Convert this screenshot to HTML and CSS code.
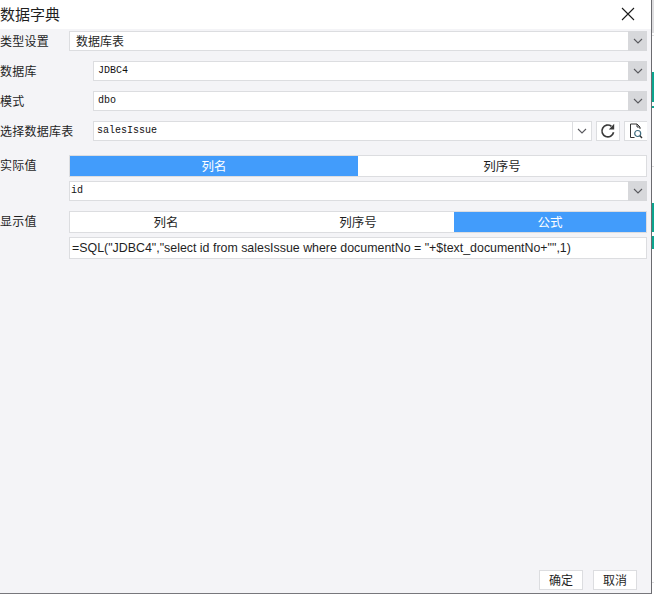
FILE: index.html
```html
<!DOCTYPE html>
<html lang="zh">
<head>
<meta charset="utf-8">
<title>数据字典</title>
<link rel="stylesheet" href="styles.css">
</head>
<body>
<div class="page">
  <div class="dialog">
    <header class="title-bar">
      <span class="title">数据字典</span>
      <button class="close" aria-label="关闭">
        <svg width="14" height="14" viewBox="0 0 14 14"><path d="M1 1 13 13M13 1 1 13" stroke="#1a1a1a" stroke-width="1.1" fill="none"/></svg>
      </button>
    </header>
    <main class="body">
      <div class="row row-type">
        <label class="label wide">类型设置</label>
        <div class="field select"><span class="value zh">数据库表</span><span class="arrow"><svg class="chev" viewBox="0 0 10 6"><path d="M1 1 5 5 9 1"/></svg></span></div>
      </div>
      <div class="row">
        <label class="label">数据库</label>
        <div class="field select"><span class="value mono">JDBC4</span><span class="arrow"><svg class="chev" viewBox="0 0 10 6"><path d="M1 1 5 5 9 1"/></svg></span></div>
      </div>
      <div class="row">
        <label class="label">模式</label>
        <div class="field select"><span class="value mono">dbo</span><span class="arrow"><svg class="chev" viewBox="0 0 10 6"><path d="M1 1 5 5 9 1"/></svg></span></div>
      </div>
      <div class="row">
        <label class="label">选择数据库表</label>
        <div class="field combo"><span class="value mono tight">salesIssue</span><span class="arrow plain"><svg class="chev" viewBox="0 0 10 6"><path d="M1 1 5 5 9 1"/></svg></span></div>
        <button class="tool tool-refresh" aria-label="刷新">
          <svg width="16" height="16" viewBox="0 0 16 16"><path d="M13.6 9.3A5.9 5.9 0 1 1 11.4 3.2" fill="none" stroke="#3a3a3a" stroke-width="1.7"/><path d="M14.2 0.8V6.4H8.8Z" fill="#3a3a3a"/></svg>
        </button>
        <button class="tool tool-preview" aria-label="预览">
          <svg width="14" height="16" viewBox="0 0 14 16"><path d="M5.5 14.5H1.5V1H8L11 4V6M8 1V4H11" fill="none" stroke="#333" stroke-width="1"/><circle cx="8.7" cy="10.5" r="3" fill="none" stroke="#3f6d80" stroke-width="1.2"/><path d="M11 12.8 13 15" stroke="#333" stroke-width="1.4"/></svg>
        </button>
      </div>

      <div class="group group-actual">
        <label class="label wide">实际值</label>
        <div class="stack">
          <div class="segment">
            <span class="seg on">列名</span>
            <span class="seg">列序号</span>
          </div>
          <div class="field select"><span class="value mono flush">id</span><span class="arrow"><svg class="chev" viewBox="0 0 10 6"><path d="M1 1 5 5 9 1"/></svg></span></div>
        </div>
      </div>

      <div class="group group-display">
        <label class="label wide">显示值</label>
        <div class="stack">
          <div class="segment">
            <span class="seg">列名</span>
            <span class="seg">列序号</span>
            <span class="seg on">公式</span>
          </div>
          <div class="field formula">=SQL("JDBC4","select id from salesIssue where documentNo = "+$text_documentNo+"",1)</div>
        </div>
      </div>
    </main>
    <footer class="actions">
      <button class="btn">确定</button>
      <button class="btn">取消</button>
    </footer>
  </div>
  <aside class="backdrop">
    <span class="bd-grey"></span>
    <span class="bd-line l1"></span>
    <span class="bd-line l2"></span>
    <span class="bd-teal first"></span>
    <span class="bd-teal second"></span>
    <span class="bd-line l3"></span>
  </aside>
</div>
</body>
</html>
```

FILE: styles.css
```css
* { box-sizing: border-box; }
html, body { margin: 0; padding: 0; background: #fff; overflow: hidden; }
body {
  font-family: "Noto Sans CJK SC", "Liberation Sans", sans-serif;
  font-size: 13px;
  color: #1f1f1f;
}
.page { display: flex; width: 654px; height: 595px; }
.dialog {
  width: 652px;
  height: 594px;
  flex: none;
  display: flex;
  flex-direction: column;
  background: #f4f4f7;
  border-right: 1px solid #6b6b70;
  border-bottom: 1px solid #77777c;
}
.title-bar {
  height: 29px;
  flex: none;
  display: flex;
  align-items: center;
  justify-content: space-between;
  background: #fff;
  padding: 0 16px 1px 0;
}
.title { font-size: 15px; line-height: 26px; }
.close { width: 14px; height: 14px; padding: 0; border: 0; background: none; display: flex; }
.body { flex: 1; padding: 2px 4px 0 0; display: flex; flex-direction: column; }
.row { display: flex; height: 20px; margin-bottom: 10px; align-items: stretch; }
.label {
  width: 93px;
  flex: none;
  font-size: 12px;
  letter-spacing: 0.25px;
  line-height: 20px;
  white-space: nowrap;
}
.label.wide { width: 69px; }
.field {
  flex: 1;
  min-width: 0;
  display: flex;
  align-items: stretch;
  background: #fff;
  border: 1px solid #dcdde0;
  height: 20px;
}
.value { flex: 1; line-height: 18px; padding-left: 4px; white-space: nowrap; }
.value.zh { font-size: 12px; padding-left: 6px; }
.mono { font-family: "Liberation Mono", "DejaVu Sans Mono", monospace; font-size: 10px; }
.value.mono { color: #111; }
.value.tight { padding-left: 3px; }
.value.flush { padding-left: 1px; }
.arrow {
  width: 19px;
  flex: none;
  background: #d7d8db;
  margin: -1px -1px -1px 0;
  display: flex;
  align-items: center;
  justify-content: center;
}
.arrow.plain { background: #fff; width: 19px; margin: 0; border-left: 1px solid #dcdde0; }
.chev { width: 10px; height: 6px; fill: none; stroke: #5a5a5f; stroke-width: 1.1; }
.tool {
  flex: none;
  height: 20px;
  padding: 0;
  background: #fff;
  border: 1px solid #dcdde0;
  display: flex;
  align-items: center;
  justify-content: center;
}
.tool-refresh { width: 24px; margin-left: 4px; }
.tool-preview { width: 23px; margin-left: 4px; border-right: 0; }
.group { display: flex; }
.group-actual { margin-top: 4px; }
.group-display { margin-top: 10px; }
.stack { flex: 1; min-width: 0; display: flex; flex-direction: column; gap: 4px; }
.segment {
  height: 22px;
  display: flex;
  background: #fff;
  border: 1px solid #dcdde0;
}
.seg {
  flex: 1;
  text-align: center;
  font-size: 12.5px;
  line-height: 20px;
}
.seg.on { background: #429cfb; color: #fff; }
.formula {
  font-family: "Liberation Sans", sans-serif;
  font-size: 12.4px;
  line-height: 20px;
  padding-left: 2px;
  white-space: nowrap;
  overflow: hidden;
}
.actions {
  flex: none;
  display: flex;
  justify-content: flex-end;
  gap: 10px;
  padding: 0 14px 3px 0;
}
.btn {
  width: 44px;
  height: 20px;
  padding: 0;
  background: #fff;
  border: 1px solid #dcdde0;
  font-family: inherit;
  font-size: 12px;
  line-height: 18px;
  color: #1f1f1f;
}
.backdrop { flex: 1; display: flex; flex-direction: column; position: relative; }
.bd-grey { display: block; height: 33px; background: #dedee0; }
.bd-line { position: absolute; left: 0; right: 0; height: 1px; background: #dcdcde; }
.bd-line.l1 { top: 35px; }
.bd-line.l2 { top: 166px; }
.bd-line.l3 { top: 582px; }
.bd-teal { position: absolute; left: 0; right: 0; background: #0ba58f; }
.bd-teal.first { top: 72px; height: 36px; }
.bd-teal.second { top: 203px; height: 46px; }
.bd-teal::after {
  content: "";
  position: absolute;
  left: 0;
  width: 2px;
  height: 4px;
  background: #fff;
}
.bd-teal.first::after { top: 30px; }
.bd-teal.second::after { top: 29px; }
```
